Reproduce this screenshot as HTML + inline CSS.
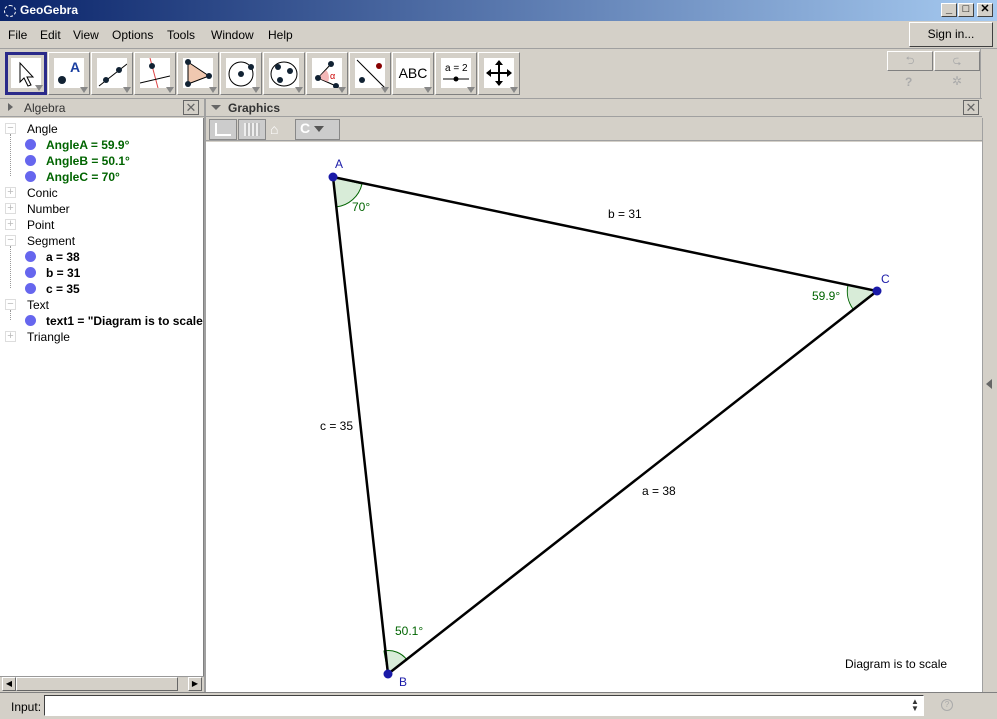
<!DOCTYPE html>
<html><head><style>
*{margin:0;padding:0;box-sizing:border-box}
body{width:997px;height:719px;overflow:hidden;background:#d4d0c8;font-family:"Liberation Sans",sans-serif;font-size:12px;position:relative}
.abs{position:absolute}
.title{left:0;top:0;width:997px;height:21px;background:linear-gradient(90deg,#0a246a,#a6caf0);color:#fff;font-weight:bold;font-size:12px;line-height:21px;padding-left:20px}
.wb{top:3px;width:16px;height:14px;background:#d4d0c8;border:1px solid;border-color:#fff #404040 #404040 #fff;font-size:11px;line-height:11px;text-align:center;color:#000;font-weight:bold}
.menu{top:22px;left:0;width:997px;height:25px;background:#d4d0c8}
.menu span{position:absolute;top:6px;font-size:12px}
.tb{top:52px;width:42px;height:43px;background:#d4d0c8;border:1px solid;border-color:#fff #808080 #808080 #fff}
.tb .in{position:absolute;left:5px;top:5px;width:30px;height:30px;background:#fff}
.tb .tri{position:absolute;right:1px;bottom:1px;width:0;height:0;border-left:4px solid transparent;border-right:4px solid transparent;border-top:6px solid #888}
.ph{height:19px;background:#d4d0c8;border-bottom:1px solid #a0a0a0;font-size:12px;line-height:19px;color:#333}
.alg{left:0;top:118px;width:204px;height:574px;background:#fff;border-right:1px solid #808080}
.row{position:absolute;font-size:12px;white-space:nowrap}
.dot{position:absolute;width:11px;height:11px;border-radius:50%;background:#6666ee}
.pm{position:absolute;width:11px;height:11px;border:1px solid #ddd;color:#bbb;font-size:11px;line-height:8px;text-align:center}
</style></head><body>
<div class="abs title">GeoGebra</div>
<div class="abs" style="left:4px;top:5px;width:12px;height:12px;border:1px dashed #fff;border-radius:50%"></div>
<div class="abs wb" style="left:941px">_</div>
<div class="abs wb" style="left:958px">□</div>
<div class="abs wb" style="left:977px">✕</div>
<div class="abs menu">
<span style="left:8px">File</span><span style="left:40px">Edit</span><span style="left:73px">View</span><span style="left:112px">Options</span><span style="left:167px">Tools</span><span style="left:211px">Window</span><span style="left:268px">Help</span>
</div>
<div class="abs" style="left:909px;top:22px;width:84px;height:25px;border:1px solid;border-color:#fff #404040 #404040 #fff;text-align:center;line-height:23px;font-size:12px">Sign in...</div>
<div class="abs" style="left:0;top:48px;width:997px;height:1px;background:#a0a0a0"></div>
<!-- toolbar -->
<div class="abs tb" style="left:5px;border:3px solid #2a2a8a"><div class="in" style="left:3px;top:3px"><svg width="30" height="30"><path d="M9 5 L9 24 L13 20 L17 28 L20 27 L16 19 L22 19 Z" fill="#fff" stroke="#000"/></svg></div><div class="tri"></div></div>
<div class="abs tb" style="left:48px"><div class="in"><svg width="30" height="30"><circle cx="8" cy="22" r="4" fill="#123"/><text x="16" y="14" font-size="14" font-weight="bold" fill="#1a3fa0">A</text></svg></div><div class="tri"></div></div>
<div class="abs tb" style="left:91px"><div class="in"><svg width="30" height="30"><line x1="2" y1="28" x2="30" y2="6" stroke="#000"/><circle cx="9" cy="22" r="3" fill="#123"/><circle cx="22" cy="12" r="3" fill="#123"/></svg></div><div class="tri"></div></div>
<div class="abs tb" style="left:134px"><div class="in"><svg width="30" height="30"><line x1="10" y1="0" x2="18" y2="30" stroke="#d44"/><line x1="0" y1="25" x2="30" y2="18" stroke="#000"/><circle cx="12" cy="8" r="3" fill="#123"/></svg></div><div class="tri"></div></div>
<div class="abs tb" style="left:177px"><div class="in"><svg width="30" height="30"><polygon points="5,4 5,26 26,18" fill="#f0c8b0" stroke="#000"/><circle cx="5" cy="4" r="3" fill="#123"/><circle cx="5" cy="26" r="3" fill="#123"/><circle cx="26" cy="18" r="3" fill="#123"/></svg></div><div class="tri"></div></div>
<div class="abs tb" style="left:220px"><div class="in"><svg width="30" height="30"><circle cx="15" cy="16" r="12" fill="none" stroke="#000"/><circle cx="15" cy="16" r="3" fill="#123"/><circle cx="25" cy="9" r="3" fill="#123"/></svg></div><div class="tri"></div></div>
<div class="abs tb" style="left:263px"><div class="in"><svg width="30" height="30"><ellipse cx="15" cy="16" rx="13" ry="12" fill="none" stroke="#000"/><circle cx="9" cy="9" r="3" fill="#123"/><circle cx="21" cy="13" r="3" fill="#123"/><circle cx="11" cy="22" r="3" fill="#123"/></svg></div><div class="tri"></div></div>
<div class="abs tb" style="left:306px"><div class="in"><svg width="30" height="30"><path d="M6 20 L19 6 M6 20 L24 28" stroke="#000"/><path d="M6 20 L14 12 A11 11 0 0 1 16 24 Z" fill="#f4b8b8"/><circle cx="6" cy="20" r="3" fill="#123"/><circle cx="19" cy="6" r="3" fill="#123"/><circle cx="24" cy="28" r="3" fill="#123"/><text x="18" y="21" font-size="9" fill="#c00">α</text></svg></div><div class="tri"></div></div>
<div class="abs tb" style="left:349px"><div class="in"><svg width="30" height="30"><line x1="2" y1="2" x2="30" y2="30" stroke="#000"/><circle cx="24" cy="8" r="3" fill="#800"/><circle cx="7" cy="22" r="3" fill="#123"/></svg></div><div class="tri"></div></div>
<div class="abs tb" style="left:392px"><div class="in" style="left:3px;width:34px;font-size:14px;line-height:30px;text-align:center">ABC</div><div class="tri"></div></div>
<div class="abs tb" style="left:435px"><div class="in"><svg width="30" height="30"><text x="4" y="13" font-size="10">a = 2</text><line x1="2" y1="21" x2="28" y2="21" stroke="#000"/><circle cx="15" cy="21" r="2.5" fill="#000"/></svg></div><div class="tri"></div></div>
<div class="abs tb" style="left:478px"><div class="in"><svg width="30" height="30"><path d="M15 3 L15 27 M3 15 L27 15" stroke="#000" stroke-width="2"/><path d="M15 2 L11 7 L19 7Z M15 28 L11 23 L19 23Z M2 15 L7 11 L7 19Z M28 15 L23 11 L23 19Z" fill="#000"/></svg></div><div class="tri"></div></div>
<div class="abs" style="left:887px;top:51px;width:46px;height:20px;border:1px solid;border-color:#fff #808080 #808080 #fff;color:#aaa;text-align:center;font-size:11px">⮌</div>
<div class="abs" style="left:934px;top:51px;width:46px;height:20px;border:1px solid;border-color:#fff #808080 #808080 #fff;color:#aaa;text-align:center;font-size:11px">⮎</div>
<div class="abs" style="left:905px;top:75px;color:#aaa;font-weight:bold">?</div>
<div class="abs" style="left:952px;top:74px;color:#aaa">✲</div>
<div class="abs" style="left:980px;top:49px;width:1px;height:49px;background:#a0a0a0"></div>
<!-- headers -->
<div class="abs ph" style="left:0;top:98px;width:204px;padding-left:24px;border-top:1px solid #a0a0a0">Algebra</div>
<div class="abs" style="left:8px;top:103px;border-top:4px solid transparent;border-bottom:4px solid transparent;border-left:5px solid #666"></div>
<div class="abs" style="left:183px;top:100px;width:16px;height:15px;border:1px solid #666;text-align:center;line-height:13px;color:#666;font-size:13px">✕</div>
<div class="abs ph" style="left:206px;top:98px;width:776px;padding-left:22px;border-top:1px solid #a0a0a0;font-weight:bold">Graphics</div>
<div class="abs" style="left:211px;top:105px;border-left:5px solid transparent;border-right:5px solid transparent;border-top:5px solid #666"></div>
<div class="abs" style="left:963px;top:100px;width:16px;height:15px;border:1px solid #666;text-align:center;line-height:13px;color:#666;font-size:13px">✕</div>
<div class="abs" style="left:204px;top:98px;width:2px;height:594px;background:#a0a0a0"></div>
<!-- graphics style bar -->
<div class="abs" style="left:206px;top:118px;width:776px;height:23px;background:#d4d0c8;border-bottom:1px solid #a0a0a0"></div>
<div class="abs" style="left:209px;top:119px;width:28px;height:21px;border:1px solid #888;background:#ccc"><div style="margin:3px 5px;width:16px;height:13px;border-left:2px solid #fff;border-bottom:2px solid #fff"></div></div>
<div class="abs" style="left:238px;top:119px;width:28px;height:21px;border:1px solid #888;background:#ccc"><div style="margin:3px 5px;width:16px;height:13px;background:repeating-linear-gradient(90deg,#eee 0 2px,#bbb 2px 4px)"></div></div>
<div class="abs" style="left:270px;top:121px;color:#fff;font-size:14px">⌂</div>
<div class="abs" style="left:295px;top:119px;width:45px;height:21px;border:1px solid #888;background:#ccc;color:#fff;font-weight:bold;font-size:14px;padding-left:4px">C<span style="display:inline-block;margin-left:4px;border-left:5px solid transparent;border-right:5px solid transparent;border-top:6px solid #555;vertical-align:middle"></span></div>
<!-- algebra -->
<div class="abs alg">
<div class="pm" style="left:5px;top:5px">−</div><div class="row" style="left:27px;top:4px">Angle</div>
<div class="dot" style="left:25px;top:21px"></div><div class="row" style="left:46px;top:20px;color:#006400;font-weight:bold">AngleA = 59.9°</div>
<div class="dot" style="left:25px;top:37px"></div><div class="row" style="left:46px;top:36px;color:#006400;font-weight:bold">AngleB = 50.1°</div>
<div class="dot" style="left:25px;top:53px"></div><div class="row" style="left:46px;top:52px;color:#006400;font-weight:bold">AngleC = 70°</div>
<div class="pm" style="left:5px;top:69px">+</div><div class="row" style="left:27px;top:68px">Conic</div>
<div class="pm" style="left:5px;top:85px">+</div><div class="row" style="left:27px;top:84px">Number</div>
<div class="pm" style="left:5px;top:101px">+</div><div class="row" style="left:27px;top:100px">Point</div>
<div class="pm" style="left:5px;top:117px">−</div><div class="row" style="left:27px;top:116px">Segment</div>
<div class="dot" style="left:25px;top:133px"></div><div class="row" style="left:46px;top:132px;font-weight:bold">a = 38</div>
<div class="dot" style="left:25px;top:149px"></div><div class="row" style="left:46px;top:148px;font-weight:bold">b = 31</div>
<div class="dot" style="left:25px;top:165px"></div><div class="row" style="left:46px;top:164px;font-weight:bold">c = 35</div>
<div class="pm" style="left:5px;top:181px">−</div><div class="row" style="left:27px;top:180px">Text</div>
<div class="dot" style="left:25px;top:197px"></div><div class="row" style="left:46px;top:196px;font-weight:bold">text1 = "Diagram is to scale</div>
<div class="pm" style="left:5px;top:213px">+</div><div class="row" style="left:27px;top:212px">Triangle</div>
<div class="abs" style="left:10px;top:16px;height:42px;border-left:1px dotted #999"></div>
<div class="abs" style="left:10px;top:128px;height:42px;border-left:1px dotted #999"></div>
<div class="abs" style="left:10px;top:192px;height:10px;border-left:1px dotted #999"></div>
</div>
<!-- scrollbar -->
<div class="abs" style="left:0;top:676px;width:204px;height:16px;background:#d4d0c8;border-top:1px solid #999"></div>
<div class="abs" style="left:2px;top:677px;width:14px;height:14px;border:1px solid;border-color:#fff #666 #666 #fff;font-size:8px;text-align:center;line-height:12px">◀</div>
<div class="abs" style="left:16px;top:677px;width:162px;height:14px;border:1px solid;border-color:#fff #666 #666 #fff"></div>
<div class="abs" style="left:188px;top:677px;width:14px;height:14px;border:1px solid;border-color:#fff #666 #666 #fff;font-size:8px;text-align:center;line-height:12px">▶</div>
<!-- canvas -->
<svg class="abs" style="left:206px;top:142px" width="776" height="550">
<rect width="776" height="550" fill="#fff"/>
<g transform="translate(-206,-142)" font-family="Liberation Sans" font-size="12">
<path d="M333 177 L362 184 A30 30 0 0 1 336 207 Z" fill="#d8ecd8" stroke="#006400" stroke-width="1"/>
<path d="M877 291 L848 285 A30 30 0 0 0 853 309 Z" fill="#d8ecd8" stroke="#006400"/>
<path d="M388 674 L384 651 A23 23 0 0 1 407 660 Z" fill="#d8ecd8" stroke="#006400"/>
<polygon points="333,177 877,291 388,674" fill="none" stroke="#000" stroke-width="2.5"/>
<circle cx="333" cy="177" r="4.5" fill="#1a1aa8"/><circle cx="877" cy="291" r="4.5" fill="#1a1aa8"/><circle cx="388" cy="674" r="4.5" fill="#1a1aa8"/>
<text x="335" y="168" fill="#1a1aa8">A</text><text x="881" y="283" fill="#1a1aa8">C</text><text x="399" y="686" fill="#1a1aa8">B</text>
<text x="352" y="211" fill="#006400">70°</text><text x="812" y="300" fill="#006400">59.9°</text><text x="395" y="635" fill="#006400">50.1°</text>
<text x="608" y="218">b = 31</text><text x="320" y="430">c = 35</text><text x="642" y="495">a = 38</text>
<text x="845" y="668">Diagram is to scale</text>
</g></svg>
<div class="abs" style="left:982px;top:118px;width:15px;height:574px;background:#d4d0c8;border-left:1px solid #a0a0a0"></div>
<div class="abs" style="left:986px;top:379px;border-top:5px solid transparent;border-bottom:5px solid transparent;border-right:6px solid #666"></div>
<!-- input -->
<div class="abs" style="left:0;top:692px;width:997px;height:27px;background:#d4d0c8;border-top:1px solid #808080"></div>
<div class="abs" style="left:11px;top:700px;font-size:12px">Input:</div>
<div class="abs" style="left:44px;top:695px;width:880px;height:21px;background:#fff;border:1px solid;border-color:#404040 #fff #fff #404040"></div>
<div class="abs" style="left:911px;top:698px;font-size:8px;line-height:7px;color:#333">▲<br>▼</div>
<div class="abs" style="left:941px;top:699px;width:12px;height:12px;border:1px solid #aaa;border-radius:50%;font-size:8px;color:#aaa;text-align:center;line-height:10px">?</div>
</body></html>
